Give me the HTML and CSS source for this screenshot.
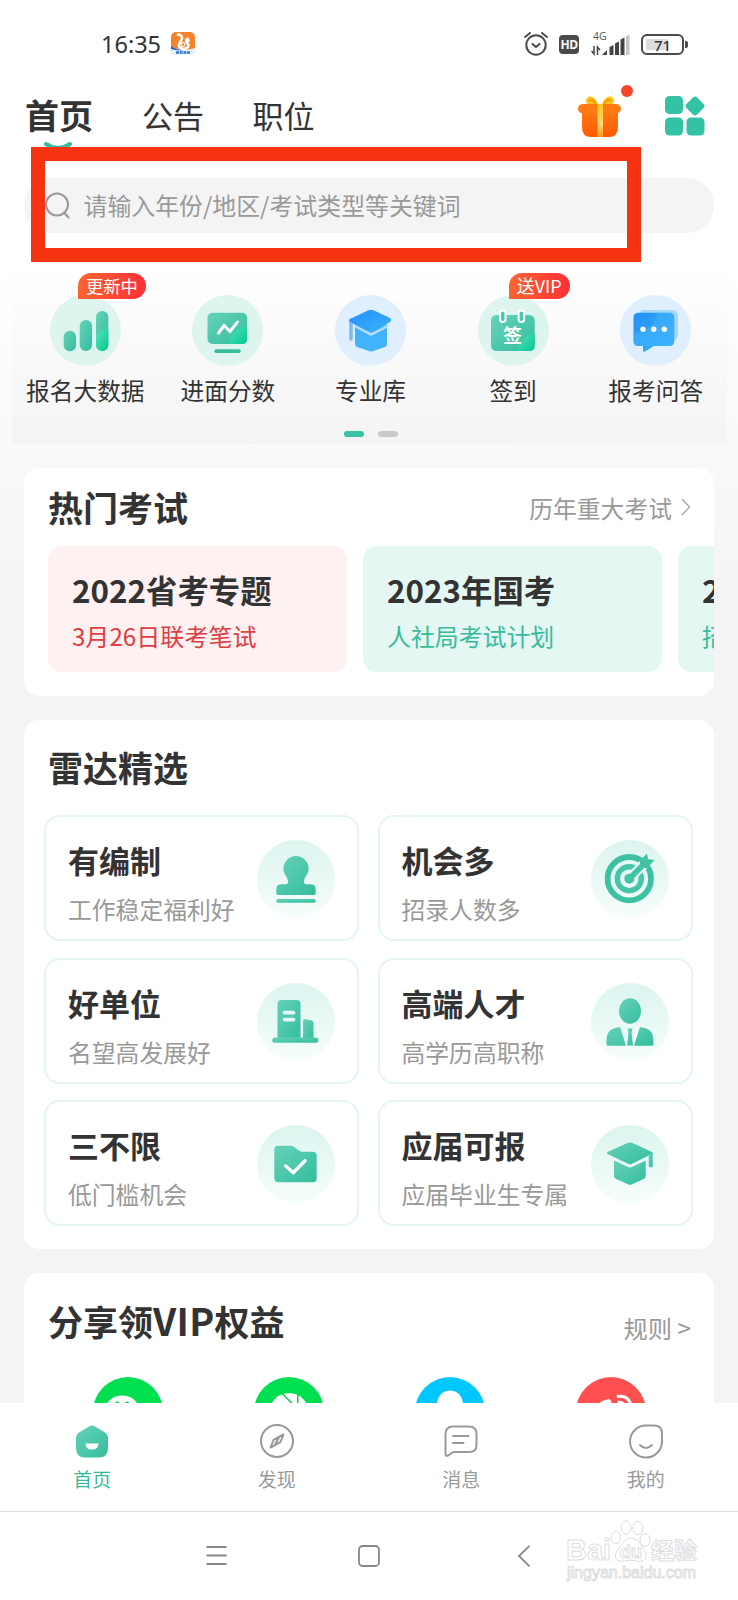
FILE: index.html
```
<!DOCTYPE html>
<html lang="zh-CN">

<head>
    <meta charset="UTF-8">
    <meta name="viewport" content="width=device-width, initial-scale=1.0">
    <title>首页</title>
    <link rel="stylesheet" href="styles.css">
</head>

<body>
    <!-- shared gradients -->
    <svg class="defs" width="0" height="0">
        <defs>
            <linearGradient id="green" x1="0" y1="0" x2="1" y2="1">
                <stop offset="0" stop-color="#66d2b8" />
                <stop offset="1" stop-color="#34bd9e" />
            </linearGradient>
            <linearGradient id="mint" x1="0" y1="0" x2="1" y2="1">
                <stop offset="0" stop-color="#5ce3bd" />
                <stop offset="1" stop-color="#00c98f" />
            </linearGradient>
            <linearGradient id="blue" x1="0" y1="0" x2="1" y2="1">
                <stop offset="0" stop-color="#258ff8" />
                <stop offset="1" stop-color="#39b4fa" />
            </linearGradient>
            <linearGradient id="orange" x1="0" y1="0" x2="0" y2="1">
                <stop offset="0" stop-color="#ff7a12" />
                <stop offset="1" stop-color="#ff5a00" />
            </linearGradient>
            <linearGradient id="gold" x1="0" y1="0" x2="0" y2="1">
                <stop offset="0" stop-color="#ffc21a" />
                <stop offset=".6" stop-color="#ffd874" />
                <stop offset="1" stop-color="#ff9a1a" />
            </linearGradient>
        </defs>
    </svg>

    <div class="status-bar">
        <span class="time">16:35</span>
        <svg class="uc" width="24" height="23" viewBox="0 0 24 23">
            <rect width="24" height="22" rx="5" fill="#f5832c" />
            <path d="M0 14c6 4 15 5 24 2v3q0 4-4 4H4q-4 0-4-4z" fill="#e4f1fb" />
            <path d="M0 14c6 4 10 4 13 4-5 1-9 0-13-1z" fill="#2c5fc0" />
            <path d="M6 3c2-1 5 0 5 3 0 3-4 5-3 8 1 3 7 4 9 1 1-2 0-4-2-4" fill="none" stroke="#fff" stroke-width="2.600" />
            <path d="M14 7l3-2 1 2 1 2-2 2-3 0z" fill="#fff" />
            <circle cx="12" cy="12.500" r="1.800" fill="none" stroke="#fff" stroke-width="1.200" />
            <path d="M5 20.500h14" stroke="#2c7ad2" stroke-width="2.500" stroke-dasharray="3 .7" />
        </svg>
        <div class="status-icons">
            <svg width="24" height="24" viewBox="0 0 24 24" fill="none" stroke="#4a4a4a" stroke-width="2" stroke-linecap="round">
                <circle cx="12" cy="13" r="9.700" />
                <path d="M8.500 12l3.500 3 3.500-3M1 5l5-4M23 5l-5-4" />
            </svg>
            <span class="hd">HD</span>
            <div class="signal">
                <span class="net">4G</span>
                <svg width="39" height="23" viewBox="0 0 39 23">
                    <path d="M3 13v8l-2.500-3M6.500 22v-8l2.500 3" fill="none" stroke="#444" stroke-width="1.500" />
                    <path d="M11 22l5-5v5zM18.500 14l4-2v10h-4zM24 10.500l4-2V22h-4zM29.500 6.500l4-2V22h-4z" fill="#444" />
                    <path d="M35 3.500l3.500-2V22H35z" fill="#c6c6c6" />
                </svg>
            </div>
            <span class="battery"><span class="battery-level">71</span></span>
        </div>
    </div>

    <header>
        <nav>
            <a class="nav-link active">首页<svg width="28" height="10" viewBox="0 0 28 10"><path d="M2 2q12 8 24 0" fill="none" stroke="#36bd9d" stroke-width="4" stroke-linecap="round" /></svg></a>
            <a class="nav-link">公告</a>
            <a class="nav-link">职位</a>
        </nav>
        <div class="header-icons">
            <div class="gift">
                <svg width="44" height="42" viewBox="0 0 44 42">
                    <path d="M20 9C17-2 8-1 8 5c0 3 3 5 12 5zM24 9C27-2 36-1 36 5c0 3-3 5-12 5z" fill="#ffc21a" />
                    <path d="M18 8c-2-4-5-5-7-3M26 8c2-4 5-5 7-3" fill="none" stroke="#f59a00" stroke-width="2" />
                    <path d="M4 14h36v17q0 10-9 10H13q-9 0-9-10z" fill="url(#orange)" />
                    <rect y="8" width="43" height="9.500" rx="4.700" fill="#ff7a14" />
                    <path d="M19.500 8h5.500v33h-5.500z" fill="url(#gold)" />
                </svg>
                <span class="dot"></span>
            </div>
            <svg width="40" height="40" viewBox="0 0 40 40" fill="#34c2a5">
                <rect width="18" height="18" rx="4.500" />
                <rect y="21.500" width="18" height="18" rx="4.500" />
                <rect x="21.500" y="21.500" width="18" height="18" rx="4.500" />
                <rect x="22.500" y="2.500" width="15" height="15" rx="3" transform="rotate(45 30 10)" />
            </svg>
        </div>
    </header>

    <div class="search-wrapper">
        <div class="search">
            <svg width="26" height="28" viewBox="0 0 26 28" fill="none" stroke="#999" stroke-width="2">
                <circle cx="12" cy="12.500" r="11" />
                <path d="M19 20.500l4.500 5" stroke-linecap="round" />
            </svg>
            <span>请输入年份/地区/考试类型等关键词</span>
        </div>
        <div class="highlight"></div>
    </div>

    <div class="menu">
        <div class="menu-grid">
            <div class="menu-item">
                <svg width="71" height="71" viewBox="0 0 71 71">
                    <circle cx="35.500" cy="35.500" r="35.500" fill="#def4ee" />
                    <rect x="13.700" y="35.700" width="12.300" height="20.500" rx="6" fill="url(#green)" />
                    <rect x="29.700" y="25" width="12.300" height="31" rx="6" fill="url(#green)" />
                    <rect x="46" y="16" width="12.300" height="40" rx="6" fill="url(#green)" />
                    <path d="M46 40q4-5 12.300-6v16a6 6 0 0 1-12.300 0z" fill="url(#mint)" />
                </svg>
                <span class="badge">更新中</span>
                <span class="menu-label">报名大数据</span>
            </div>
            <div class="menu-item">
                <svg width="71" height="71" viewBox="0 0 71 71">
                    <circle cx="35.500" cy="35.500" r="35.500" fill="#def4ee" />
                    <rect x="15.500" y="17.700" width="39.500" height="31.300" rx="5" fill="url(#green)" />
                    <path d="M36 49q3-15 19-19v14q0 5-5 5z" fill="url(#mint)" />
                    <path d="M26.500 38l5.500-7.500 6 6 7.500-9.500" fill="none" stroke="#fff" stroke-width="3" stroke-linecap="round" />
                    <rect x="22.300" y="54.300" width="26.400" height="3.700" rx="1.800" fill="#36bd9d" />
                </svg>
                <span class="menu-label">进面分数</span>
            </div>
            <div class="menu-item">
                <svg width="71" height="71" viewBox="0 0 71 71">
                    <circle cx="35.500" cy="35.500" r="35.500" fill="#e0effd" />
                    <path d="M20 29l16 7 16-7v20q0 2-2 3l-12 4q-2 1-4 0l-12-4q-2-1-2-3z" fill="#42b2fa" />
                    <path d="M16 25v19" stroke="#78baf6" stroke-width="3.500" stroke-linecap="round" />
                    <path d="M20 31l16 8.500 17-8.500" fill="none" stroke="#b8ddfb" stroke-width="2.500" />
                    <path d="M15 24l18-8.600q3-1.200 6 0L55 23q2.500 2 0 4l-16 9q-3 1.500-6 0L15 27q-2-1.500 0-3z" fill="url(#blue)" />
                </svg>
                <span class="menu-label">专业库</span>
            </div>
            <div class="menu-item">
                <svg width="71" height="71" viewBox="0 0 71 71">
                    <circle cx="35.500" cy="35.500" r="35.500" fill="#def4ee" />
                    <rect x="13" y="20" width="43.700" height="36" rx="5.500" fill="url(#green)" />
                    <path d="M38 56q5-14 18.700-18v12.500q0 5.500-5.500 5.500z" fill="url(#mint)" />
                    <rect x="22" y="15.500" width="5.500" height="11.500" rx="2.700" fill="#4cc7a9" stroke="#fff" stroke-width="2" />
                    <rect x="40.600" y="15.500" width="5.500" height="11.500" rx="2.700" fill="#4cc7a9" stroke="#fff" stroke-width="2" />
                    <text x="34.500" y="47.500" class="sign-text">签</text>
                </svg>
                <span class="badge vip">送VIP</span>
                <span class="menu-label">签到</span>
            </div>
            <div class="menu-item">
                <svg width="71" height="71" viewBox="0 0 71 71">
                    <circle cx="35.500" cy="35.500" r="35.500" fill="#e0effd" />
                    <path d="M22 15h30q6 0 6 6v20l-4 6H20V17z" fill="#a3d6fb" />
                    <path d="M18.500 17.700h30.700q5 0 5 5V46q0 5-5 5H34l-9 5.500q-2 .8-2-1V51h-4.500q-5 0-5-5V22.700q0-5 5-5z" fill="url(#blue)" />
                    <path d="M13.500 38q18 0 24-20h11.700q5 0 5 5V46q0 5-5 5H18.500q-5 0-5-5z" fill="#3fb4fb" opacity=".6" />
                    <g fill="#fff">
                        <circle cx="23" cy="34.300" r="2.700" />
                        <circle cx="33.700" cy="34.300" r="2.700" />
                        <circle cx="44.300" cy="34.300" r="2.700" />
                    </g>
                </svg>
                <span class="menu-label">报考问答</span>
            </div>
        </div>
        <div class="pager"><span class="on"></span><span></span></div>
    </div>

    <main>
        <section class="card hot">
            <div class="card-head">
                <h2>热门考试</h2>
                <a class="more">历年重大考试<svg width="10" height="18" viewBox="0 0 10 18"><path d="M1 1l7.500 8L1 17" fill="none" stroke="#aaa" stroke-width="1.500" /></svg></a>
            </div>
            <div class="exam-row">
                <div class="exam pink">
                    <h3>2022省考专题</h3>
                    <p>3月26日联考笔试</p>
                </div>
                <div class="exam">
                    <h3>2023年国考</h3>
                    <p>人社局考试计划</p>
                </div>
                <div class="exam">
                    <h3>2</h3>
                    <p>招</p>
                </div>
            </div>
        </section>

        <section class="card radar">
            <h2>雷达精选</h2>
            <div class="tile-grid">
                <div class="tile">
                    <div>
                        <h3>有编制</h3>
                        <p>工作稳定福利好</p>
                    </div>
                    <div class="tile-icon">
                        <svg width="78" height="78" viewBox="0 0 78 78" fill="url(#green)">
                            <path d="M39 16a12.600 12.600 0 0 1 12.600 12.600c0 5-3.600 8-4.600 12q-.5 3.700 2 3.700h4.500q5.200 0 5.200 5.200V53q0 2-2 2H21.300q-2 0-2-2v-3.500q0-5.200 5.200-5.200H29q2.500 0 2-3.700c-1-4-4.600-7-4.600-12A12.600 12.600 0 0 1 39 16z" />
                            <rect x="19.300" y="59" width="39.400" height="3.800" rx="1.900" />
                        </svg>
                    </div>
                </div>
                <div class="tile">
                    <div>
                        <h3>机会多</h3>
                        <p>招录人数多</p>
                    </div>
                    <div class="tile-icon">
                        <svg width="78" height="78" viewBox="0 0 78 78">
                            <circle cx="38.300" cy="38.700" r="21.700" fill="none" stroke="#3dc1a2" stroke-width="5.800" />
                            <circle cx="38.300" cy="38.700" r="12" fill="none" stroke="#47c5a7" stroke-width="5.400" />
                            <path d="M38.300 38.700L60 17" stroke="#e6f8f4" stroke-width="10" />
                            <circle cx="38.300" cy="38.700" r="5" fill="#43c3a5" />
                            <path d="M36.500 36.500l12.500-12.500v-3.500L56 13.500l1 5.500 6.500 1-7 8H53L40.500 40.500z" fill="#43c3a5" />
                        </svg>
                    </div>
                </div>
                <div class="tile">
                    <div>
                        <h3>好单位</h3>
                        <p>名望高发展好</p>
                    </div>
                    <div class="tile-icon">
                        <svg width="78" height="78" viewBox="0 0 78 78" fill="url(#green)">
                            <path d="M20.500 56V21q0-4 4-4h15q4 0 4 4v35z" />
                            <path d="M46 56V38q0-2 2-2l6.500 1.500q2 .5 2 2.500v16z" />
                            <rect x="15.300" y="54.600" width="46" height="5.200" rx="2.600" />
                            <path d="M27.500 29.700h9M27.500 36.600h9" stroke="#e6f8f4" stroke-width="3.700" stroke-linecap="round" />
                        </svg>
                    </div>
                </div>
                <div class="tile">
                    <div>
                        <h3>高端人才</h3>
                        <p>高学历高职称</p>
                    </div>
                    <div class="tile-icon">
                        <svg width="78" height="78" viewBox="0 0 78 78" fill="url(#green)">
                            <ellipse cx="39" cy="28" rx="11" ry="12.800" />
                            <path d="M29 44l6 18.700H17q-1.500 0-1.500-1.500C15.500 50 17 46 29 44zM49 44l-6 18.700h18q1.500 0 1.500-1.500C62.500 50 61 46 49 44z" />
                            <path d="M36.500 45.500h5l-1 4 1.500 13h-6l1.500-13z" />
                        </svg>
                    </div>
                </div>
                <div class="tile">
                    <div>
                        <h3>三不限</h3>
                        <p>低门槛机会</p>
                    </div>
                    <div class="tile-icon">
                        <svg width="78" height="78" viewBox="0 0 78 78" fill="url(#green)">
                            <path d="M21.300 20.700h12q2 0 3.700 1.200l5.500 4q1 .8 3 .8h10.200q4 0 4 4v22.600q0 4-4 4H21.300q-4 0-4-4V24.700q0-4 4-4z" />
                            <path d="M28.700 41l7.600 6.700L48 35.700" fill="none" stroke="#fff" stroke-width="3.500" stroke-linecap="round" />
                        </svg>
                    </div>
                </div>
                <div class="tile">
                    <div>
                        <h3>应届可报</h3>
                        <p>应届毕业生专属</p>
                    </div>
                    <div class="tile-icon">
                        <svg width="78" height="78" viewBox="0 0 78 78" fill="url(#green)">
                            <path d="M16.500 27L37 17.800q2-.8 4 0L61 27q1.500 1 0 2L41 38.700q-2 1-4 0L16.500 29q-1.500-1 0-2z" />
                            <path d="M23 35.500l14 6.600q2 .8 4 0l13.700-6.600V51q0 2-2 3L41 59.300q-2 1-4 0L25 54q-2-1-2-3z" />
                            <path d="M57.700 31l4-3v12.500q0 2-2 2t-2-2z" />
                        </svg>
                    </div>
                </div>
            </div>
        </section>

        <section class="card share">
            <div class="card-head">
                <h2>分享领<span class="latin">VIP</span>权益</h2>
                <a class="more rule">规则 &gt;</a>
            </div>
            <div class="share-row">
                <svg width="70" height="70" viewBox="0 0 72 72">
                    <circle cx="36" cy="36" r="36" fill="#00df50" />
                    <ellipse cx="30" cy="33" rx="17" ry="14" fill="#fff" />
                    <circle cx="25" cy="27.500" r="2.200" fill="#00df50" />
                    <circle cx="35" cy="27.500" r="2.200" fill="#00df50" />
                </svg>
                <svg width="70" height="70" viewBox="0 0 72 72">
                    <circle cx="36" cy="36" r="36" fill="#00df50" />
                    <circle cx="36" cy="37" r="20.500" fill="#fff" />
                    <path d="M29 17l11 11M45 17v20M18 28h16" stroke="#00d04c" stroke-width="1.500" />
                </svg>
                <svg width="70" height="70" viewBox="0 0 72 72">
                    <circle cx="36" cy="36" r="36" fill="#00c8ff" />
                    <path d="M22.500 40V28a13.500 14 0 0 1 27 0v12z" fill="#fff" />
                </svg>
                <svg width="70" height="70" viewBox="0 0 72 72">
                    <circle cx="36" cy="36" r="36" fill="#ff5050" />
                    <path d="M14 40c4-10 12-16 19-17 3 0 4 2 3 6l10 2v10z" fill="#fff" />
                    <path d="M42 20q13-2 15 11M43 26q6-1 8 6" fill="none" stroke="#fff" stroke-width="3" />
                </svg>
            </div>
        </section>
    </main>

    <div class="tab-bar">
        <a class="tab current">
            <svg width="36" height="36" viewBox="0 0 36 36">
                <path d="M15 3.500q3-2 6 0l10 6q3 2 3 5.500v10q0 9.500-9 9.500H11q-9 0-9-9.500V15q0-3.500 3-5.500z" fill="url(#green)" />
                <path d="M11.500 20.500h13q0 6-6.500 6t-6.500-6z" fill="#fff" />
            </svg>
            <span>首页</span>
        </a>
        <a class="tab">
            <svg width="36" height="36" viewBox="0 0 36 36" fill="none" stroke="#999" stroke-width="2">
                <circle cx="18" cy="18" r="16" />
                <path d="M24.500 11.500l-3 7.500-10 5.500 3-7.500zM20 15l-4 6" stroke-linejoin="round" />
            </svg>
            <span>发现</span>
        </a>
        <a class="tab">
            <svg width="36" height="36" viewBox="0 0 36 36" fill="none" stroke="#999" stroke-width="2" stroke-linecap="round">
                <path d="M10 3.500h16q7.500 0 7.500 7.500v11q0 7-7.500 7H11.500q-2 0-3.500 1.500l-3 2q-2.500 1-2.500-1.500V11q0-7.500 7.500-7.500z" />
                <path d="M10 13h15.500M10 20h10.500" />
            </svg>
            <span>消息</span>
        </a>
        <a class="tab">
            <svg width="36" height="36" viewBox="0 0 36 36" fill="none" stroke="#999" stroke-width="2" stroke-linecap="round">
                <path d="M18 2.500h8q8 0 8 8V18a16 16 0 1 1-16-15.500z" />
                <path d="M12 22q6 6 12 0" />
            </svg>
            <span>我的</span>
        </a>
    </div>

    <footer>
        <svg width="22" height="22" viewBox="0 0 22 22" fill="none" stroke="#888" stroke-width="1.800"><path d="M.5 2h20M.5 10.500h20M.5 19h20" /></svg>
        <svg width="22" height="22" viewBox="0 0 22 22" fill="none" stroke="#888" stroke-width="1.800"><rect x="1" y="1" width="20" height="20" rx="3.500" /></svg>
        <svg width="22" height="22" viewBox="0 0 22 22" fill="none" stroke="#888" stroke-width="1.800"><path d="M19.500 .8L9 11l10.500 10.300" /></svg>
        <div class="watermark">
            <svg width="134" height="66" viewBox="0 0 134 66">
                <text x="0" y="41" class="wm-brand">Bai</text>
                <g fill="#fff" stroke="#dcdcdc" stroke-width="1">
                    <ellipse cx="50" cy="18.500" rx="4.700" ry="6.300" />
                    <ellipse cx="60" cy="8.500" rx="5" ry="6.800" />
                    <ellipse cx="72" cy="9" rx="5" ry="6.800" />
                    <ellipse cx="79" cy="21" rx="5" ry="6.300" />
                    <path d="M65 19c8 0 10 8 14 13 4 6-1 12-8 10-4-1-8-1-12 0-8 2-12-4-8-10 4-5 7-13 14-13z" />
                </g>
                <text x="54" y="39" class="wm-du">du</text>
                <text x="85" y="40" class="wm-cn">经验</text>
                <text x="1" y="59" class="wm-url">jingyan.baidu.com</text>
            </svg>
        </div>
    </footer>
</body>

</html>
```
FILE: styles.css
```
* {
    box-sizing: border-box;
}

body {
    margin: 0;
    width: 738px;
    height: 1600px;
    overflow: hidden;
    display: flex;
    flex-direction: column;
    font-family: "Noto Sans CJK SC", "Noto Sans", sans-serif;
    color: #333;
    background: linear-gradient(#fff 262px, #f4f4f4 620px);
}

h2,
h3,
p {
    margin: 0;
}

svg {
    display: block;
    flex-shrink: 0;
}

.defs {
    position: absolute;
}

/* phone status bar */
.status-bar {
    height: 88px;
    flex-shrink: 0;
    padding: 0 50px 0 101px;
    display: flex;
    align-items: center;
}

.time {
    font-family: "Noto Sans", sans-serif;
    font-size: 23.5px;
    line-height: 24px;
}

.uc {
    margin: 0 0 2px 10px;
}

.status-icons {
    margin-left: auto;
    display: flex;
    align-items: center;
}

.hd {
    width: 20px;
    height: 19px;
    margin: 0 12px 0 11px;
    border-radius: 4px;
    background: #4a4a4a;
    color: #fff;
    font: bold 12px/20px "Open Sans", sans-serif;
    text-align: center;
    letter-spacing: -0.5px;
}

.signal {
    position: relative;
}

.net {
    position: absolute;
    left: 2px;
    top: -4px;
    color: #555;
    font: 10.5px/14px "Open Sans", sans-serif;
}

.battery {
    position: relative;
    width: 43px;
    height: 21px;
    margin: 0 4px 0 11px;
    padding: 3px;
    border: 2px solid #4a4a4a;
    border-radius: 6px;
}

.battery::after {
    content: "";
    position: absolute;
    right: -6px;
    top: 5px;
    width: 3px;
    height: 7px;
    border-radius: 0 2px 2px 0;
    background: #4a4a4a;
}

.battery-level {
    display: block;
    height: 11px;
    background: linear-gradient(90deg, #ddd 68%, #fff 68%);
    font: 500 15px/12px "Noto Sans", sans-serif;
    text-align: center;
}

/* header */
header {
    height: 58px;
    flex-shrink: 0;
    padding: 0 33px 0 25px;
    display: flex;
    justify-content: space-between;
}

nav {
    display: flex;
    line-height: 53px;
}

.nav-link {
    margin-right: 48.5px;
    font-size: 31px;
}

.nav-link.active {
    position: relative;
    margin-right: 49px;
    font-size: 34px;
    font-weight: bold;
}

.nav-link.active svg {
    position: absolute;
    left: 19px;
    top: 54px;
}

.header-icons {
    display: flex;
    gap: 43.5px;
    padding-top: 8px;
}

.gift {
    position: relative;
}

.dot {
    position: absolute;
    left: 43px;
    top: -11px;
    width: 12px;
    height: 12px;
    border-radius: 50%;
    background: #f5462c;
}

/* search box */
.search-wrapper {
    position: relative;
    flex-shrink: 0;
    padding: 32px 24px 0;
}

.search {
    height: 55px;
    padding-left: 20.5px;
    border-radius: 28px;
    background: #f4f4f4;
    display: flex;
    align-items: center;
    color: #999;
    font-size: 23.9px;
}

.search span {
    margin: 0 0 1px 13px;
    line-height: 30px;
}

.highlight {
    position: absolute;
    left: 31px;
    top: 1px;
    width: 610px;
    height: 115px;
    border: 14px solid #f63310;
}

/* round icon menu */
.menu {
    height: 182px;
    flex-shrink: 0;
    margin: 29px 11px 24px 12px;
    padding: 33px 0 0 2px;
    background: linear-gradient(#fff, #f4f4f4);
}

.menu-grid {
    display: grid;
    grid-template-columns: repeat(5, 1fr);
}

.menu-item {
    position: relative;
    display: flex;
    flex-direction: column;
    align-items: center;
}

.menu-label {
    margin-top: 8px;
    font-size: 23.7px;
    line-height: 32px;
}

.badge {
    position: absolute;
    left: 64px;
    top: -22px;
    height: 26px;
    padding: 0 8px;
    border-radius: 13px 13px 13px 0;
    background: linear-gradient(90deg, #fb6431, #fc3038);
    color: #fff;
    font-size: 17.3px;
    line-height: 25px;
}

.badge.vip {
    left: 67px;
    font-size: 17.9px;
}

.sign-text {
    font-size: 19px;
    font-weight: bold;
    fill: #fff;
    text-anchor: middle;
}

.pager {
    display: flex;
    justify-content: center;
    gap: 14px;
    margin-top: 25px;
}

.pager span {
    width: 20px;
    height: 6px;
    border-radius: 3px;
    background: #c8c8c8;
}

.pager .on {
    background: #3bc1a4;
}

/* content cards */
main {
    flex: 1;
    min-height: 0;
    overflow: hidden;
    padding: 0 24px;
    display: flex;
    flex-direction: column;
    gap: 24px;
}

.card {
    flex-shrink: 0;
    border-radius: 15px;
    background: #fff;
    overflow: hidden;
}

.card h2 {
    font-size: 35px;
    line-height: 48px;
    font-weight: bold;
}

.card-head {
    display: flex;
    justify-content: space-between;
    padding: 0 23px 0 24px;
}

.more {
    display: flex;
    align-items: center;
    gap: 9px;
    height: 48px;
    color: #999;
    font-size: 23.8px;
}

.hot {
    height: 228px;
    padding-top: 15px;
}

.exam-row {
    display: flex;
    gap: 16px;
    margin-top: 15px;
    padding-left: 24px;
}

.exam {
    width: 299px;
    height: 126px;
    flex-shrink: 0;
    padding: 23px 24px;
    border-radius: 14px;
    background: #e4f7f2;
}

.exam h3,
.tile h3 {
    font-size: 31px;
    line-height: 42px;
    font-weight: bold;
}

.exam h3 {
    font-size: 31.4px;
}

.exam p {
    margin-top: 8px;
    color: #39bb9d;
    font-size: 23.9px;
    line-height: 34px;
}

.exam.pink {
    background: #fef1f1;
}

.pink p {
    color: #e03d43;
    font-size: 24.1px;
}

.radar {
    height: 529px;
    padding: 23px 22px 0 20px;
}

.radar h2 {
    padding-left: 4px;
}

.tile-grid {
    display: grid;
    grid-template-columns: repeat(2, 315px);
    gap: 16.5px 18.5px;
    margin-top: 24px;
}

.tile {
    height: 126px;
    padding: 23px 22px 0;
    border: 2px solid #e4f5f0;
    border-radius: 16px;
    display: flex;
    justify-content: space-between;
}

.tile h3 {
    line-height: 40px;
}

.tile p {
    margin-top: 12px;
    color: #999;
    font-size: 23.8px;
    line-height: 34px;
    white-space: nowrap;
}

.tile-icon {
    width: 78px;
    height: 78px;
    border-radius: 50%;
    background: linear-gradient(#dcf4ef, #f6fefc);
}

.share {
    height: 240px;
    padding-top: 23px;
}

.latin {
    font-size: 37.5px;
    letter-spacing: 0.3px;
}

.rule {
    padding-top: 14px;
    font-size: 24.3px;
}

.share-row {
    display: grid;
    grid-template-columns: repeat(4, 161px);
    justify-items: center;
    margin: 32px 0 0 23px;
}

/* bottom tabs */
.tab-bar {
    height: 109px;
    flex-shrink: 0;
    display: flex;
    background: #fff;
    border-bottom: 1px solid #ddd;
}

.tab {
    flex: 1;
    padding-top: 20px;
    display: flex;
    flex-direction: column;
    align-items: center;
    color: #999;
    font-size: 19px;
}

.tab span {
    margin-top: 6px;
    line-height: 28px;
}

.tab.current {
    color: #36b99b;
}

footer {
    position: relative;
    height: 88px;
    flex-shrink: 0;
    display: flex;
    gap: 130px;
    padding: 33px 0 0 206px;
    background: #fff;
}

.watermark {
    position: absolute;
    left: 566px;
    top: 7px;
}

.wm-brand,
.wm-du,
.wm-cn,
.wm-url {
    fill: #fff;
    stroke: #dedede;
    stroke-width: 1px;
    font: bold 29px "Liberation Sans", sans-serif;
}

.wm-du {
    font-size: 18px;
}

.wm-cn {
    font: bold 23px "Noto Sans CJK SC", sans-serif;
}

.wm-url {
    font-size: 16px;
    font-weight: normal;
}
```
